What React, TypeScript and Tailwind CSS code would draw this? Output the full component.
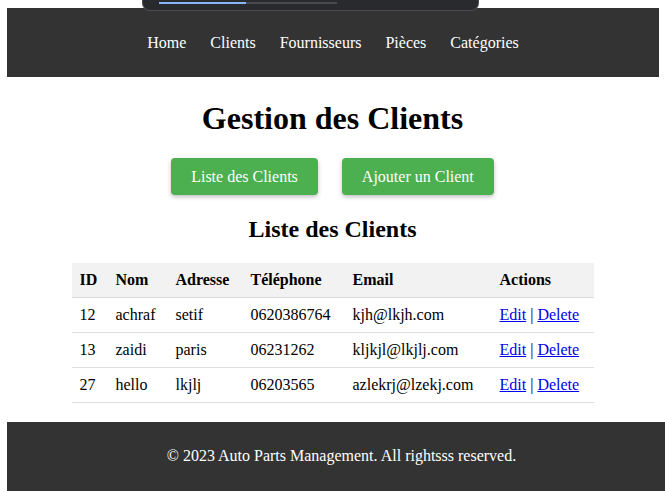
import React from 'react';

const clients = [
    { id: 12, nom: 'achraf', adresse: 'setif', tel: '0620386764', email: 'kjh@lkjh.com' },
    { id: 13, nom: 'zaidi', adresse: 'paris', tel: '06231262', email: 'kljkjl@lkjlj.com' },
    { id: 27, nom: 'hello', adresse: 'lkjlj', tel: '06203565', email: 'azlekrj@lzekj.com' },
];

const navLinks = ['Home', 'Clients', 'Fournisseurs', 'Pièces', 'Catégories'];

const App: React.FC = () => {
    return (
        <div className="relative min-h-screen overflow-x-hidden bg-white px-2 pt-2 font-['Liberation_Serif',serif] text-[16px] text-black">
            {/* browser loading overlay */}
            <div className="absolute left-[142px] top-0 z-10 h-[11px] w-[337px] rounded-b-[8px] border border-t-0 border-[#4a4b4f] bg-[#292a2d]">
                <div className="ml-[16px] mt-[2px] flex h-[2px] w-[178px] bg-[#4a4b4f]">
                    <div className="h-full w-[87px] bg-[#8ab4f8]" />
                </div>
            </div>

            <header className="-ml-px -mr-[2px] flex h-[69px] items-center justify-center bg-[#333] text-white">
                <nav className="flex gap-[24px]">
                    {navLinks.map((link) => (
                        <a key={link} className="text-white">{link}</a>
                    ))}
                </nav>
            </header>

            <main className="flex flex-col items-center">
                <h1 className="mt-[23px] text-[32px] font-bold leading-[37px]">Gestion des Clients</h1>
                <div className="mt-[21px] flex gap-[24px]">
                    <button className="h-[37px] rounded-[4px] bg-[#4CAF50] px-[20px] text-white shadow-[0_2px_4px_rgba(0,0,0,0.25)]">Liste des Clients</button>
                    <button className="h-[37px] rounded-[4px] bg-[#4CAF50] px-[20px] text-white shadow-[0_2px_4px_rgba(0,0,0,0.25)]">Ajouter un Client</button>
                </div>
                <h2 className="mt-[20px] text-[24px] font-bold leading-[28px]">Liste des Clients</h2>

                <table className="mt-[20px] w-[522px] table-fixed border-collapse text-left">
                    <colgroup>
                        <col className="w-[36px]" />
                        <col className="w-[60px]" />
                        <col className="w-[75px]" />
                        <col className="w-[102px]" />
                        <col className="w-[147px]" />
                        <col className="w-[102px]" />
                    </colgroup>
                    <thead>
                        <tr className="border-b border-[#ddd] bg-[#f2f2f2]">
                            <th className="h-[34px] px-2 font-bold">ID</th>
                            <th className="px-2 font-bold">Nom</th>
                            <th className="px-2 font-bold">Adresse</th>
                            <th className="px-2 font-bold">Téléphone</th>
                            <th className="px-2 font-bold">Email</th>
                            <th className="px-2 font-bold">Actions</th>
                        </tr>
                    </thead>
                    <tbody>
                        {clients.map((c) => (
                            <tr key={c.id} className="border-b border-[#ddd]">
                                <td className="h-[35px] px-2">{c.id}</td>
                                <td className="px-2">{c.nom}</td>
                                <td className="px-2">{c.adresse}</td>
                                <td className="px-2">{c.tel}</td>
                                <td className="px-2">{c.email}</td>
                                <td className="whitespace-nowrap px-2">
                                    <a className="text-[#0000EE] underline">Edit</a> | <a className="text-[#0000EE] underline">Delete</a>
                                </td>
                            </tr>
                        ))}
                    </tbody>
                </table>
            </main>

            <footer className="-ml-px -mr-2 mt-[19px] flex h-[80px] justify-center bg-[#333] pl-[11px] pt-[22px] text-white">
                <p>© 2023 Auto Parts Management. All rightsss reserved.</p>
            </footer>
        </div>
    );
};

export default App;
